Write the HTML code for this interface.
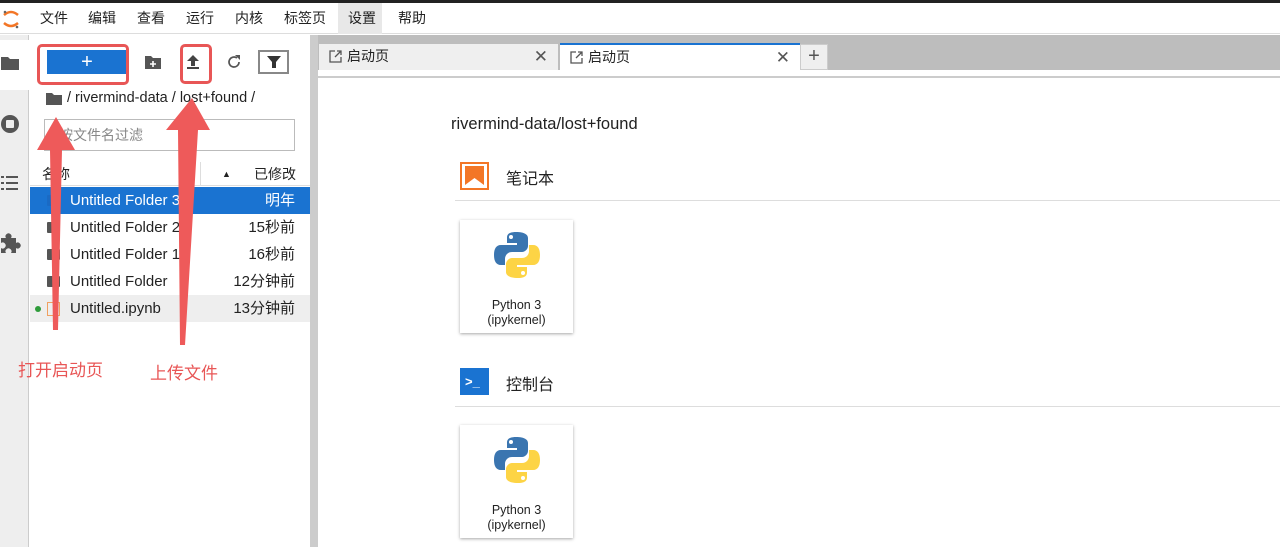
<!DOCTYPE html>
<html><head><meta charset="utf-8">
<style>
*{box-sizing:border-box;margin:0;padding:0}
body{width:1280px;height:547px;overflow:hidden;background:#fff;font-family:"Liberation Sans","Noto Sans CJK SC",sans-serif;color:#222;position:relative}
.abs{position:absolute}
.menu span{position:absolute;top:3px;height:31px;line-height:31px;font-size:14px;color:#222}
.row{position:absolute;left:30px;width:280px;height:27px;font-size:15px;line-height:27px}
.row .n{position:absolute;left:40px}
.row .d{position:absolute;right:15px}
.row .ic{position:absolute;left:17px;top:8px;width:13px;height:11px;background:#555;border-radius:1px}
.card{position:absolute;left:460px;width:113px;height:113px;background:#fff;box-shadow:0 1px 3px rgba(0,0,0,.35);text-align:center;font-size:12.5px;line-height:15px}
</style></head><body>
<div class="abs" style="left:0;top:0;width:1280px;height:3px;background:#222"></div>
<div class="abs" style="left:0;top:3px;width:1280px;height:31px;border-bottom:1px solid #ddd"></div>
<svg class="abs" style="left:2px;top:8px" width="18" height="22" viewBox="0 0 18 22"><path d="M2 7 Q9 1 16 7" stroke="#f37626" stroke-width="2.5" fill="none"/><path d="M2 15 Q9 21 16 15" stroke="#f37626" stroke-width="2.5" fill="none"/><circle cx="3" cy="4" r="1.3" fill="#666"/><circle cx="15" cy="19" r="1.3" fill="#666"/></svg>
<div class="abs" style="left:338px;top:3px;width:44px;height:31px;background:#e8e8e8"></div>
<div class="menu"><span style="left:40px">文件</span><span style="left:88px">编辑</span><span style="left:137px">查看</span><span style="left:186px">运行</span><span style="left:235px">内核</span><span style="left:284px">标签页</span><span style="left:348px">设置</span><span style="left:398px">帮助</span></div>
<div class="abs" style="left:0;top:35px;width:29px;height:512px;background:#eee;border-right:1px solid #ccc"></div>
<div class="abs" style="left:0;top:40px;width:29px;height:50px;background:#fff"></div>
<svg class="abs" style="left:0;top:55px" width="20" height="16"><path d="M1 2h7l2 2h9v11H1z" fill="#555"/></svg>
<svg class="abs" style="left:0;top:113px" width="22" height="22"><circle cx="10" cy="11" r="9" fill="#555"/><rect x="6" y="7" width="8" height="8" rx="1" fill="#eee"/></svg>
<svg class="abs" style="left:0;top:174px" width="20" height="18" fill="#555"><rect x="1" y="2" width="3" height="2"/><rect x="6" y="2" width="12" height="2"/><rect x="1" y="8" width="3" height="2"/><rect x="6" y="8" width="12" height="2"/><rect x="1" y="14" width="3" height="2"/><rect x="6" y="14" width="12" height="2"/></svg>
<svg class="abs" style="left:0;top:232px" width="22" height="22" fill="#555"><path d="M1 6h5a3 3 0 1 1 5 0h5v5a3 3 0 1 1 0 5v5h-5a3 3 0 1 0-5 0H1v-5a3 3 0 1 0 0-5z"/></svg>
<div class="abs" style="left:47px;top:50px;width:80px;height:24px;background:#1a73d1;color:#fff;font-size:20px;text-align:center;line-height:25px">+</div>
<svg class="abs" style="left:145px;top:55px" width="16" height="14"><path d="M0 1h6l2 2h8v11H0z" fill="#555"/><path d="M8 6v6M5 9h6" stroke="#fff" stroke-width="1.6"/></svg>
<svg class="abs" style="left:186px;top:54px" width="14" height="16"><path d="M7 1L1 7h4v5h4V7h4z" fill="#444"/><rect x="1" y="13" width="12" height="2" fill="#444"/></svg>
<svg class="abs" style="left:226px;top:54px" width="16" height="16"><path d="M13 8A5 5 0 1 1 11 4" stroke="#555" stroke-width="1.7" fill="none"/><path d="M9 1h5v5z" fill="#555"/></svg>
<div class="abs" style="left:258px;top:50px;width:31px;height:24px;border:2px solid #888;background:#fff"></div>
<svg class="abs" style="left:266px;top:55px" width="16" height="14"><path d="M1 1h14l-5 6v6H6V7z" fill="#333"/></svg>
<svg class="abs" style="left:46px;top:92px" width="16" height="13"><path d="M0 1h6l2 2h8v10H0z" fill="#555"/></svg>
<div class="abs" style="left:67px;top:89px;font-size:14.5px;line-height:18px">/ rivermind-data / lost+found /</div>
<div class="abs" style="left:44px;top:119px;width:251px;height:32px;border:1px solid #bbb;font-size:14px;line-height:30px;padding-left:14px;color:#888">按文件名过滤</div>
<div class="abs" style="left:30px;top:162px;width:280px;height:24px;border-bottom:1px solid #ddd;font-size:14px;line-height:24px"><span class="abs" style="left:12px">名称</span><span class="abs" style="left:170px;top:0;height:24px;border-left:1px solid #ddd"></span><span class="abs" style="left:192px;font-size:9px">▲</span><span class="abs" style="right:14px">已修改</span></div>
<div class="row" style="top:187px;background:#1a73d1;color:#fff"><i class="ic" style="background:#1a6ac4"></i><span class="n">Untitled Folder 3</span><span class="d">明年</span></div>
<div class="row" style="top:214px"><i class="ic"></i><span class="n">Untitled Folder 2</span><span class="d">15秒前</span></div>
<div class="row" style="top:241px"><i class="ic"></i><span class="n">Untitled Folder 1</span><span class="d">16秒前</span></div>
<div class="row" style="top:268px"><i class="ic"></i><span class="n">Untitled Folder</span><span class="d">12分钟前</span></div>
<div class="row" style="top:295px;background:#eee"><i class="abs" style="left:5px;top:11px;width:6px;height:6px;border-radius:50%;background:#2e9b3a"></i><i class="abs" style="left:17px;top:7px;width:13px;height:14px;border:1.5px solid #f0a060"></i><span class="n">Untitled.ipynb</span><span class="d">13分钟前</span></div>
<div class="abs" style="left:310px;top:35px;width:8px;height:512px;background:#ccc"></div>
<div class="abs" style="left:318px;top:35px;width:962px;height:35px;background:#bdbdbd"></div>
<div class="abs" style="left:318px;top:70px;width:962px;height:8px;background:#fff;border-bottom:2px solid #ccc"></div>
<div class="abs" style="left:319px;top:44px;width:239px;height:26px;background:#efefef;font-size:14px;line-height:25px"><svg class="abs" style="left:10px;top:6px" width="13" height="13"><path d="M6 1H1v11h11V7M8 1h4v4M12 1L6 7" stroke="#555" stroke-width="1.3" fill="none"/></svg><span class="abs" style="left:28px">启动页</span><span class="abs" style="right:10px;font-size:17px;color:#555">✕</span></div>
<div class="abs" style="left:560px;top:43px;width:240px;height:29px;background:#fff;border-top:2px solid #1a73d1;font-size:14px;line-height:25px"><svg class="abs" style="left:10px;top:6px" width="13" height="13"><path d="M6 1H1v11h11V7M8 1h4v4M12 1L6 7" stroke="#555" stroke-width="1.3" fill="none"/></svg><span class="abs" style="left:28px">启动页</span><span class="abs" style="right:10px;font-size:17px;color:#555">✕</span></div>
<div class="abs" style="left:800px;top:44px;width:28px;height:26px;background:#efefef;border:1px solid #ccc;text-align:center;font-size:20px;line-height:22px;color:#555">+</div>
<div class="abs" style="left:451px;top:115px;font-size:16.5px">rivermind-data/lost+found</div>
<div class="abs" style="left:460px;top:162px;width:29px;height:28px;border:2px solid #f37626;background:#fff"></div>
<svg class="abs" style="left:464px;top:166px" width="21" height="20"><path d="M1 0h19v19l-9.5-7L1 19z" fill="#f37626"/></svg>
<div class="abs" style="left:506px;top:165px;font-size:16px">笔记本</div>
<div class="abs" style="left:455px;top:200px;width:825px;height:1px;background:#ddd"></div>
<div class="abs" style="left:460px;top:368px;width:29px;height:27px;background:#1a73d1;color:#fff;font-size:13px;font-weight:bold;line-height:27px;padding-left:5px">&gt;_</div>
<div class="abs" style="left:506px;top:371px;font-size:16px">控制台</div>
<div class="abs" style="left:455px;top:406px;width:825px;height:1px;background:#ddd"></div>
<div class="card" style="top:220px"><svg style="margin-top:10px" width="50" height="50" viewBox="0 0 50 50"><path d="M24 2c-9 0-9 4-9 6v5h10v2H9c-5 0-7 4-7 10s2 10 7 10h4v-6c0-4 3-7 7-7h10c3 0 6-3 6-6V8c0-3-3-6-12-6z" fill="#3a75b0"/><circle cx="19" cy="7" r="2" fill="#fff"/><path d="M26 48c9 0 9-4 9-6v-5H25v-2h16c5 0 7-4 7-10s-2-10-7-10h-4v6c0 4-3 7-7 7H20c-3 0-6 3-6 6v8c0 3 3 6 12 6z" fill="#fdd445"/><circle cx="31" cy="43" r="2" fill="#fff"/></svg><div style="margin-top:14px">Python 3<br>(ipykernel)</div></div>
<div class="card" style="top:425px"><svg style="margin-top:10px" width="50" height="50" viewBox="0 0 50 50"><path d="M24 2c-9 0-9 4-9 6v5h10v2H9c-5 0-7 4-7 10s2 10 7 10h4v-6c0-4 3-7 7-7h10c3 0 6-3 6-6V8c0-3-3-6-12-6z" fill="#3a75b0"/><circle cx="19" cy="7" r="2" fill="#fff"/><path d="M26 48c9 0 9-4 9-6v-5H25v-2h16c5 0 7-4 7-10s-2-10-7-10h-4v6c0 4-3 7-7 7H20c-3 0-6 3-6 6v8c0 3 3 6 12 6z" fill="#fdd445"/><circle cx="31" cy="43" r="2" fill="#fff"/></svg><div style="margin-top:14px">Python 3<br>(ipykernel)</div></div>
<div class="abs" style="left:37px;top:44px;width:92px;height:41px;border:3px solid #e85656;border-radius:5px"></div>
<div class="abs" style="left:180px;top:44px;width:32px;height:40px;border:3px solid #e85656;border-radius:5px"></div>
<svg class="abs" style="left:0;top:0" width="320" height="400"><path d="M53 330L50 150H37L56 117L75 150H62L58 330z" fill="#ee5a5a"/><path d="M180 345L178 130H166L192 98L210 130H198L185 345z" fill="#ee5a5a"/></svg>
<div class="abs" style="left:18px;top:356px;font-size:17px;color:#e85656">打开启动页</div>
<div class="abs" style="left:150px;top:359px;font-size:17px;color:#e85656">上传文件</div>
</body></html>
